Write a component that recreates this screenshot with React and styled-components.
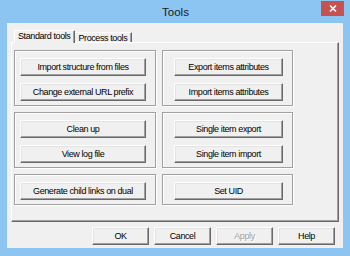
import React from 'react';
import styled, { createGlobalStyle } from 'styled-components';

const GlobalStyle = createGlobalStyle`
  html, body {
    margin: 0;
    padding: 0;
    background: #8cc4f2;
  }
  * {
    box-sizing: border-box;
  }
`;

const Frame = styled.div`
  width: 350px;
  height: 256px;
  background: #8cc4f2;
  display: flex;
  flex-direction: column;
  padding: 0 7px 8px 7px;
  font-family: 'Liberation Sans', Arial, sans-serif;
  color: #000;
`;

const TitleBar = styled.div`
  height: 23px;
  display: grid;
  grid-template-columns: 1fr auto 1fr;
  align-items: start;
  margin-right: -1px;
`;

const Title = styled.div`
  grid-column: 2;
  font-size: 11.5px;
  line-height: 12px;
  padding-top: 6px;
  color: #1a1a1a;
`;

const CloseButton = styled.div`
  grid-column: 3;
  justify-self: end;
  width: 23px;
  height: 15px;
  margin-top: 1px;
  background: #c75050;
  display: flex;
  align-items: center;
  justify-content: center;
`;

const Client = styled.div`
  flex: 1;
  background: #f0f0f0;
  display: flex;
  flex-direction: column;
  padding: 7px 4px 0 4px;
`;

const TabStrip = styled.div`
  height: 12px;
  display: flex;
  align-items: flex-end;
  padding-left: 3px;
  position: relative;
  z-index: 1;
`;

const Tab = styled.div`
  height: ${(p) => (p.$active ? '13px' : '10px')};
  margin-bottom: ${(p) => (p.$active ? '-1px' : '0')};
  padding: 0 ${(p) => (p.$active ? '4px' : '4px')} 0 3px;
  background: #f0f0f0;
  border-top: 1px solid #fff;
  border-left: ${(p) => (p.$active ? '1px solid #fff' : 'none')};
  border-right: 1px solid #696969;
  box-shadow: inset -1px 0 #a0a0a0;
  font-size: 9px;
  letter-spacing: -0.4px;
  line-height: ${(p) => (p.$active ? '11px' : '10px')};
  white-space: nowrap;
`;

const TabPage = styled.div`
  height: 180px;
  border-top: 1px solid #fff;
  border-left: 1px solid #fff;
  border-right: 1px solid #696969;
  border-bottom: 1px solid #696969;
  box-shadow: inset -1px -1px #a0a0a0;
  display: grid;
  grid-template-columns: 142px 131px;
  grid-template-rows: 56px 56px 31px;
  column-gap: 6px;
  row-gap: 6px;
  padding: 7px 0 0 2px;
  align-content: start;
`;

const Group = styled.div`
  border: 1px solid #a0a0a0;
  box-shadow: inset 1px 1px #fff, 1px 1px #fff;
  display: flex;
  flex-direction: column;
  gap: 7px;
  padding: 7px 0 0 ${(p) => p.$padLeft}px;
`;

const Button = styled.div`
  width: ${(p) => p.$width}px;
  height: 18px;
  flex-shrink: 0;
  background: #f0f0f0;
  border: 1px solid;
  border-color: #fff #696969 #696969 #fff;
  box-shadow: inset -1px -1px #a0a0a0, inset 1px 1px #e3e3e3;
  display: flex;
  align-items: center;
  justify-content: center;
  font-size: 9px;
  letter-spacing: -0.4px;
  white-space: nowrap;
  color: ${(p) => (p.$disabled ? '#a0a0a0' : '#000')};
  text-shadow: ${(p) => (p.$disabled ? '1px 1px #fff' : 'none')};
`;

const Footer = styled.div`
  display: flex;
  justify-content: flex-end;
  gap: 5px;
  padding: 5px 4px 0 0;
`;

const App = () => {
  return (
    <>
      <GlobalStyle />
      <Frame>
        <TitleBar>
          <Title>Tools</Title>
          <CloseButton>
            <svg width="8" height="7" viewBox="0 0 8 7">
              <path d="M1 0.5 L7 6.5 M7 0.5 L1 6.5" stroke="#fff" strokeWidth="1.6" />
            </svg>
          </CloseButton>
        </TitleBar>
        <Client>
          <TabStrip>
            <Tab $active>Standard tools</Tab>
            <Tab>Process tools</Tab>
          </TabStrip>
          <TabPage>
            <Group $padLeft={5}>
              <Button $width={126}>Import structure from files</Button>
              <Button $width={126}>Change external URL prefix</Button>
            </Group>
            <Group $padLeft={11}>
              <Button $width={109}>Export items attributes</Button>
              <Button $width={109}>Import items attributes</Button>
            </Group>
            <Group $padLeft={5}>
              <Button $width={126}>Clean up</Button>
              <Button $width={126}>View log file</Button>
            </Group>
            <Group $padLeft={11}>
              <Button $width={109}>Single item export</Button>
              <Button $width={109}>Single item import</Button>
            </Group>
            <Group $padLeft={5}>
              <Button $width={126}>Generate child links on dual</Button>
            </Group>
            <Group $padLeft={11}>
              <Button $width={109}>Set UID</Button>
            </Group>
          </TabPage>
          <Footer>
            <Button $width={57}>OK</Button>
            <Button $width={57}>Cancel</Button>
            <Button $width={57} $disabled>Apply</Button>
            <Button $width={57}>Help</Button>
          </Footer>
        </Client>
      </Frame>
    </>
  );
};

export default App;
